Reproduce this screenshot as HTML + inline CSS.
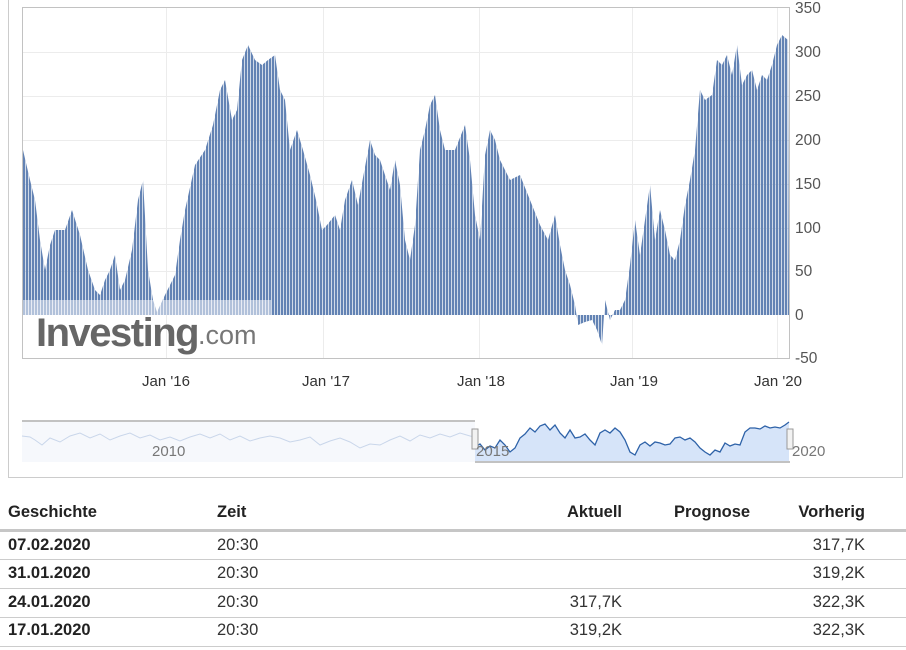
<!DOCTYPE html>
<html><head><meta charset="utf-8"><style>
body{margin:0;background:#fff;font-family:"Liberation Sans",Arial,sans-serif;width:906px;height:650px;overflow:hidden;position:relative}
.t{position:absolute;font-size:16.5px;color:#333;line-height:19px}
.b{font-weight:bold;color:#222}
.r{text-align:right}
.line{position:absolute;left:0;width:906px;height:1px;background:#ccc}
</style></head><body>
<svg width="906" height="480" style="position:absolute;left:0;top:0" xmlns="http://www.w3.org/2000/svg">
<defs>
<pattern id="bp" x="23" y="0" width="3" height="10" patternUnits="userSpaceOnUse">
<rect x="0" y="0" width="2.3" height="10" fill="#6383b4"/>
</pattern>
</defs>
<line x1="8.5" y1="0" x2="8.5" y2="477" stroke="#ccc"/>
<line x1="902.5" y1="0" x2="902.5" y2="477" stroke="#ccc"/>
<line x1="8" y1="477.5" x2="903" y2="477.5" stroke="#ccc"/>
<g stroke="#ececec" stroke-width="1">
<line x1="22" y1="52.5" x2="790" y2="52.5"/><line x1="22" y1="96.5" x2="790" y2="96.5"/>
<line x1="22" y1="140.5" x2="790" y2="140.5"/><line x1="22" y1="184.5" x2="790" y2="184.5"/>
<line x1="22" y1="228.5" x2="790" y2="228.5"/><line x1="22" y1="271.5" x2="790" y2="271.5"/>
<line x1="166.5" y1="7" x2="166.5" y2="358"/><line x1="323.5" y1="7" x2="323.5" y2="358"/>
<line x1="479.5" y1="7" x2="479.5" y2="358"/><line x1="632.5" y1="7" x2="632.5" y2="358"/>
<line x1="777.5" y1="7" x2="777.5" y2="358"/>
</g>
<polygon fill="url(#bp)" points="23,315 23,150 30,180 35,200 40,240 45,270 50,245 55,230 65,230 72,210 80,235 88,270 95,290 100,295 105,280 110,270 115,255 120,290 125,280 132,250 138,200 143,180 148,270 153,300 157,312 165,295 175,275 180,240 185,210 195,165 205,150 213,125 220,90 225,80 232,120 237,110 242,60 248,45 255,60 262,65 268,60 275,55 280,90 285,100 290,150 297,130 303,150 310,175 316,200 322,230 327,225 335,215 340,230 345,200 352,180 358,205 362,183 370,140 375,155 380,160 385,175 390,190 395,160 400,185 405,240 410,260 415,225 420,150 425,130 430,105 435,95 440,130 445,150 455,150 465,125 470,160 475,215 480,240 485,155 490,130 495,140 500,160 510,180 520,175 530,200 540,225 548,240 555,215 560,245 565,270 570,285 575,305 578,325 585,322 592,320 597,330 602,345 605,300 610,320 615,310 620,310 625,300 630,265 635,220 640,255 645,220 650,185 655,240 660,210 665,230 670,255 675,260 680,240 685,205 690,180 695,150 700,90 705,100 712,95 717,60 722,65 727,55 732,75 737,45 742,85 747,75 752,70 757,90 762,75 767,80 772,65 777,45 782,35 788,40 789,315"/>
<rect x="23" y="300" width="248" height="15" fill="#fff" opacity="0.5"/>
<rect x="22.5" y="7.5" width="767" height="351" fill="none" stroke="#c2c2c2"/>
<text x="36" y="346" font-size="40" font-weight="bold" fill="#666" letter-spacing="-1.5">Investing</text>
<text x="198" y="344" font-size="27" fill="#777">.com</text>
<g font-size="15.5" fill="#555">
<text x="795" y="13">350</text><text x="795" y="57">300</text><text x="795" y="101">250</text>
<text x="795" y="145">200</text><text x="795" y="189">150</text><text x="795" y="233">100</text>
<text x="795" y="276">50</text><text x="795" y="320">0</text><text x="795" y="363">-50</text>
</g>
<g font-size="15" fill="#333" text-anchor="middle">
<text x="166" y="386">Jan '16</text><text x="326" y="386">Jan '17</text><text x="481" y="386">Jan '18</text>
<text x="634" y="386">Jan '19</text><text x="778" y="386">Jan '20</text>
</g>
<rect x="22" y="421" width="453" height="41" fill="#f6f8fc"/>
<line x1="22" y1="421" x2="475" y2="421" stroke="#c2c2c2" stroke-width="2"/>
<polygon fill="#d6e4f9" points="475,462 475,447 480,444 485,450 490,446 495,448 500,440 505,445 510,452 515,448 520,438 525,434 530,428 535,432 540,426 545,424 550,430 555,425 560,433 565,438 570,430 575,438 580,437 585,434 590,440 595,445 600,433 605,430 610,433 615,428 620,432 625,440 630,452 635,455 640,445 645,442 650,446 655,442 660,443 665,445 670,444 675,438 680,437 685,440 690,438 695,442 700,448 705,452 710,455 715,450 720,452 725,443 730,446 735,444 740,445 745,432 750,428 755,428 760,429 765,426 770,428 775,427 780,428 785,425 789,422 789,462"/>
<polyline fill="none" stroke="#c9d6ea" stroke-width="1" points="22,436 30,437 35,440 42,445 50,438 60,442 70,436 80,433 90,438 100,434 110,440 120,436 130,433 140,438 150,435 160,440 170,437 180,441 190,437 200,434 210,438 220,434 230,440 240,436 250,441 260,438 270,436 280,438 290,442 300,440 310,437 320,445 330,441 340,438 350,442 360,448 370,444 380,445 390,440 400,436 410,441 420,435 430,438 440,434 450,437 460,433 470,436 475,437"/>
<polyline fill="none" stroke="#2e62a8" stroke-width="1.3" points="475,447 480,444 485,450 490,446 495,448 500,440 505,445 510,452 515,448 520,438 525,434 530,428 535,432 540,426 545,424 550,430 555,425 560,433 565,438 570,430 575,438 580,437 585,434 590,440 595,445 600,433 605,430 610,433 615,428 620,432 625,440 630,452 635,455 640,445 645,442 650,446 655,442 660,443 665,445 670,444 675,438 680,437 685,440 690,438 695,442 700,448 705,452 710,455 715,450 720,452 725,443 730,446 735,444 740,445 745,432 750,428 755,428 760,429 765,426 770,428 775,427 780,428 785,425 789,422"/>
<line x1="475" y1="462" x2="790" y2="462" stroke="#c2c2c2" stroke-width="2"/>
<rect x="472" y="429" width="6" height="20" fill="#f2f2f2" stroke="#999"/>
<rect x="787" y="429" width="6" height="20" fill="#f2f2f2" stroke="#999"/>
<g font-size="15" fill="#777"><text x="152" y="456">2010</text><text x="476" y="456">2015</text><text x="792" y="456">2020</text></g>
</svg>
<div class="t b" style="left:8px;top:503px">Geschichte</div>
<div class="t b" style="left:217px;top:503px">Zeit</div>
<div class="t b r" style="left:522px;top:503px;width:100px">Aktuell</div>
<div class="t b" style="left:674px;top:503px">Prognose</div>
<div class="t b r" style="left:765px;top:503px;width:100px">Vorherig</div>
<div class="line" style="top:529px;height:3px;background:#c6c6c6"></div>
<div class="t b" style="left:8px;top:536px">07.02.2020</div><div class="t" style="left:217px;top:536px">20:30</div><div class="t r" style="left:765px;top:536px;width:100px">317,7K</div>
<div class="line" style="top:559px"></div>
<div class="t b" style="left:8px;top:564px">31.01.2020</div><div class="t" style="left:217px;top:564px">20:30</div><div class="t r" style="left:765px;top:564px;width:100px">319,2K</div>
<div class="line" style="top:588px"></div>
<div class="t b" style="left:8px;top:593px">24.01.2020</div><div class="t" style="left:217px;top:593px">20:30</div><div class="t r" style="left:522px;top:593px;width:100px">317,7K</div><div class="t r" style="left:765px;top:593px;width:100px">322,3K</div>
<div class="line" style="top:617px"></div>
<div class="t b" style="left:8px;top:621px">17.01.2020</div><div class="t" style="left:217px;top:621px">20:30</div><div class="t r" style="left:522px;top:621px;width:100px">319,2K</div><div class="t r" style="left:765px;top:621px;width:100px">322,3K</div>
<div class="line" style="top:646px"></div>
</body></html>
